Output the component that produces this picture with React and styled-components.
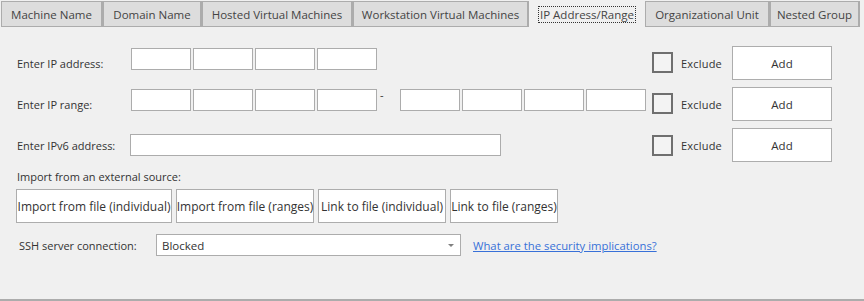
import React from "react";
import styled, { createGlobalStyle } from "styled-components";

const Global = createGlobalStyle`
  html, body { margin: 0; padding: 0; background: #f0f0f0; }
  body { font-family: "Open Sans", "Noto Sans", sans-serif; font-size: 11px; color: #333; }
`;

const Page = styled.div`
  width: 864px;
  height: 301px;
  box-sizing: border-box;
  background: #f0f0f0;
  border-bottom: 2px solid #acacac;
  display: flex;
  flex-direction: column;
`;

const TabBar = styled.div`
  display: flex;
  padding: 1px 0 0 1px;
  height: 27px;
  box-sizing: border-box;
`;

const Tab = styled.div`
  width: ${(p) => p.$w}px;
  height: 26px;
  box-sizing: border-box;
  display: flex;
  align-items: center;
  justify-content: center;
  font-size: 11.5px;
  color: #444;
  background: ${(p) => (p.$active ? "transparent" : "#dddddd")};
  border: ${(p) => (p.$active ? "none" : "1px solid #acacac")};
  border-right-width: ${(p) => (p.$active ? 0 : 2)}px;
`;

const Focus = styled.span`
  outline: 1px dotted #333;
  outline-offset: 0;
  padding: 0 1px;
  line-height: 15px;
`;

const Content = styled.div`
  padding: 19px 32px 0 17px;
  display: flex;
  flex-direction: column;
`;

const Row = styled.div`
  display: flex;
  align-items: center;
  height: 34px;
  margin-bottom: 7px;
`;

const Label = styled.div`
  width: ${(p) => p.$w || 114}px;
  flex-shrink: 0;
  font-size: 11px;
`;

const Fields = styled.div`
  display: flex;
  align-items: center;
  gap: 2px;
  align-self: flex-start;
  margin-top: 2px;
`;

const Box = styled.div`
  width: ${(p) => p.$w || 60}px;
  height: 22px;
  box-sizing: border-box;
  background: #fff;
  border: 1px solid #acacac;
`;

const Dash = styled.span`
  width: 19px;
  padding-left: 1px;
  box-sizing: border-box;
  font-size: 11px;
  align-self: flex-start;
  margin-top: -2px;
`;

const RightGroup = styled.div`
  margin-left: auto;
  display: flex;
  align-items: center;
`;

const Check = styled.div`
  width: 21px;
  height: 21px;
  box-sizing: border-box;
  border: 2px solid #6f6f6f;
  background: #f3f3f3;
  margin-top: ${(p) => p.$mt || 0}px;
`;

const CheckText = styled.span`
  width: 51px;
  padding-left: 8px;
  font-size: 11px;
  letter-spacing: 0.2px;
  color: #333;
`;

const Button = styled.div`
  height: 34px;
  width: ${(p) => p.$w}px;
  box-sizing: border-box;
  background: #fff;
  border: 1px solid #adadad;
  display: flex;
  align-items: center;
  justify-content: center;
  font-size: ${(p) => p.$fs || 11.5}px;
  color: #333;
  white-space: nowrap;
`;

const Section = styled.div`
  font-size: 11px;
  height: 16px;
`;

const ButtonRow = styled.div`
  display: flex;
  gap: 4px;
  margin-top: 4px;
  margin-left: -1px;
`;

const SshRow = styled.div`
  display: flex;
  align-items: center;
  margin-top: 11px;
  margin-left: 2px;
`;

const Select = styled.div`
  width: 305px;
  height: 22px;
  box-sizing: border-box;
  background: #fff;
  border: 1px solid #acacac;
  display: flex;
  align-items: center;
  padding: 0 6px 0 5px;
  font-size: 11.5px;
  color: #333;
`;

const SelectText = styled.span`
  flex: 1;
`;

const Arrow = styled.span`
  width: 0;
  height: 0;
  border-left: 3px solid transparent;
  border-right: 3px solid transparent;
  border-top: 3px solid #808080;
`;

const Link = styled.a`
  margin-left: 12px;
  font-size: 11.3px;
  color: #3870d8;
  text-decoration: underline;
  cursor: pointer;
`;

const tabs = [
  ["Machine Name", 102],
  ["Domain Name", 99],
  ["Hosted Virtual Machines", 151],
  ["Workstation Virtual Machines", 176],
  ["IP Address/Range", 116, true],
  ["Organizational Unit", 125],
  ["Nested Group", 90],
];

const imports = [
  ["Import from file (individual)", 156],
  ["Import from file (ranges)", 138],
  ["Link to file (individual)", 128],
  ["Link to file (ranges)", 108],
];

const Quad = () => (
  <>
    <Box />
    <Box />
    <Box />
    <Box />
  </>
);

const Right = ({ mt }) => (
  <RightGroup>
    <Check $mt={mt} />
    <CheckText>Exclude</CheckText>
    <Button $w={100}>Add</Button>
  </RightGroup>
);

export default function App() {
  return (
    <>
      <Global />
      <Page>
        <TabBar>
          {tabs.map(([t, w, a]) => (
            <Tab key={t} $w={w} $active={a}>
              {a ? <Focus>{t}</Focus> : t}
            </Tab>
          ))}
        </TabBar>
        <Content>
          <Row>
            <Label>Enter IP address:</Label>
            <Fields>
              <Quad />
            </Fields>
            <Right mt={-1} />
          </Row>
          <Row>
            <Label>Enter IP range:</Label>
            <Fields>
              <Quad />
              <Dash>-</Dash>
              <Quad />
            </Fields>
            <Right mt={-1} />
          </Row>
          <Row>
            <Label $w={113}>Enter IPv6 address:</Label>
            <Box $w={371} />
            <Right />
          </Row>
          <Section>Import from an external source:</Section>
          <ButtonRow>
            {imports.map(([t, w]) => (
              <Button key={t} $w={w} $fs={12}>
                {t}
              </Button>
            ))}
          </ButtonRow>
          <SshRow>
            <Label $w={137}>SSH server connection:</Label>
            <Select>
              <SelectText>Blocked</SelectText>
              <Arrow />
            </Select>
            <Link>What are the security implications?</Link>
          </SshRow>
        </Content>
      </Page>
    </>
  );
}
